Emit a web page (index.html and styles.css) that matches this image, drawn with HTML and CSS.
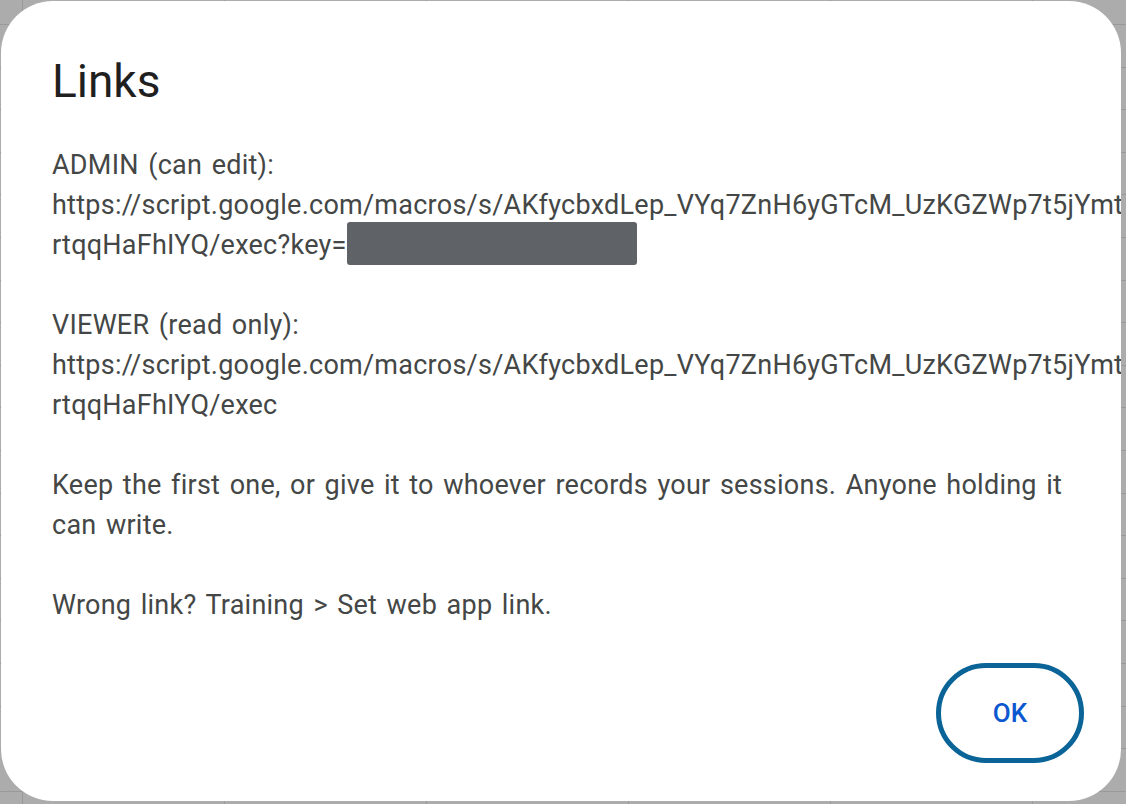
FILE: index.html
```html
<!DOCTYPE html>
<html lang="en">
<head>
<meta charset="utf-8">
<title>Links</title>
<link rel="stylesheet" href="styles.css">
</head>
<body>
<div class="sheet">
  <div class="dialog" role="dialog" aria-labelledby="dlg-title">
    <h1 class="title" id="dlg-title">Links</h1>
    <div class="content">
      <p>ADMIN (can edit):<br><span class="url">https://script.google.com/macros/s/AKfycbxdLep_VYq7ZnH6yGTcM_UzKGZWp7t5jYmt</span><br>rtqqHaFhIYQ/exec?key=<span class="redact"></span></p>
      <p>VIEWER (read only):<br><span class="url">https://script.google.com/macros/s/AKfycbxdLep_VYq7ZnH6yGTcM_UzKGZWp7t5jYmt</span><br>rtqqHaFhIYQ/exec</p>
      <p>Keep the first one, or give it to whoever records your sessions. Anyone holding it can write.</p>
      <p>Wrong link? Training &gt; Set web app link.</p>
    </div>
    <div class="actions">
      <button class="ok" type="button">OK</button>
    </div>
  </div>
</div>
</body>
</html>
```

FILE: styles.css
```css
html, body {
  margin: 0;
  padding: 0;
  height: 100%;
}
body {
  font-family: Roboto, "Liberation Sans", Arial, sans-serif;
  background-color: #acacac;
  overflow: hidden;
}
.sheet {
  width: 1126px;
  height: 804px;
  box-sizing: border-box;
  padding: 1px 5px 3px 1px;
  background-color: #acacac;
  background-image:
    repeating-linear-gradient(to bottom, transparent 0, transparent 24px, #999 24px, #999 25px, transparent 25px, transparent 42.6px),
    repeating-linear-gradient(to right, transparent 0, transparent 22px, #999 22px, #999 23px, transparent 23px, transparent 202px);
}
.dialog {
  width: 1120px;
  height: 800px;
  box-sizing: border-box;
  background: #fff;
  border-radius: 52px;
  overflow: hidden;
  display: flex;
  flex-direction: column;
  padding: 52px 37px 38px 51px;
}
.title {
  margin: 0;
  font-family: Roboto, "Liberation Sans", Arial, sans-serif;
  font-weight: 400;
  font-size: 46px;
  line-height: 56px;
  color: #1f1f1f;
}
.content {
  margin-top: 36px;
  font-size: 27px;
  line-height: 40px;
  letter-spacing: 0.25px;
  word-spacing: 2.5px;
  color: #444746;
}
.content p {
  margin: 0 0 40px;
}
.content p:last-child {
  margin-bottom: 0;
}
.url {
  white-space: nowrap;
}
.redact {
  display: inline-block;
  width: 290px;
  height: 43px;
  margin-top: -3px;
  vertical-align: -11px;
  background: #5f6368;
  border-radius: 3px;
}
.actions {
  margin-top: auto;
  display: flex;
  justify-content: flex-end;
}
.ok {
  width: 148px;
  height: 100px;
  box-sizing: border-box;
  border: 5px solid #0a6497;
  border-radius: 50px;
  background: #fff;
  color: #0b57d0;
  font-family: Roboto, "Liberation Sans", Arial, sans-serif;
  font-size: 26px;
  font-weight: 500;
  padding: 0;
  cursor: pointer;
}
```
